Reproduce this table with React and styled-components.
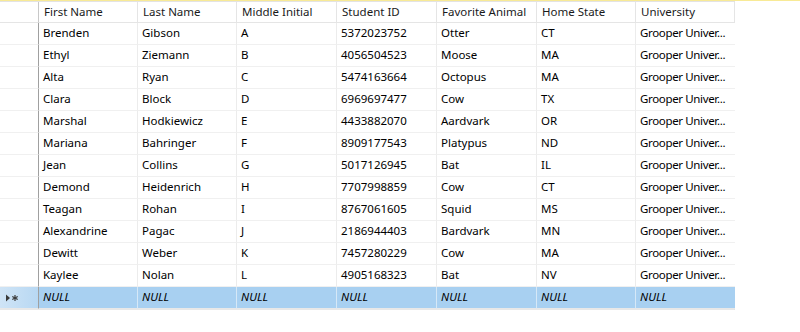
import React from 'react';
import styled, { createGlobalStyle } from 'styled-components';

const GlobalStyle = createGlobalStyle`
  html, body {
    margin: 0;
    padding: 0;
    background: #ffffff;
  }
  body {
    border-top: 1px solid #f8ea96;
    font-family: "Segoe UI", "Noto Sans", sans-serif;
    font-size: 11.5px;
    color: #000;
  }
`

const columns = ['First Name', 'Last Name', 'Middle Initial', 'Student ID', 'Favorite Animal', 'Home State', 'University']

const students = [
  ['Brenden', 'Gibson', 'A', '5372023752', 'Otter', 'CT'],
  ['Ethyl', 'Ziemann', 'B', '4056504523', 'Moose', 'MA'],
  ['Alta', 'Ryan', 'C', '5474163664', 'Octopus', 'MA'],
  ['Clara', 'Block', 'D', '6969697477', 'Cow', 'TX'],
  ['Marshal', 'Hodkiewicz', 'E', '4433882070', 'Aardvark', 'OR'],
  ['Mariana', 'Bahringer', 'F', '8909177543', 'Platypus', 'ND'],
  ['Jean', 'Collins', 'G', '5017126945', 'Bat', 'IL'],
  ['Demond', 'Heidenrich', 'H', '7707998859', 'Cow', 'CT'],
  ['Teagan', 'Rohan', 'I', '8767061605', 'Squid', 'MS'],
  ['Alexandrine', 'Pagac', 'J', '2186944403', 'Bardvark', 'MN'],
  ['Dewitt', 'Weber', 'K', '7457280229', 'Cow', 'MA'],
  ['Kaylee', 'Nolan', 'L', '4905168323', 'Bat', 'NV'],
]

const Grid = styled.div`
  display: grid;
  grid-template-columns: 39px 99px 99px 100px 100px 100px 99px 99px;
  width: 735px;
  border-top: 1px solid #e3e3e3;
  border-bottom: 1px solid #e8e8e8;
  border-right: 1px solid #e0e0e0;
  box-sizing: border-box;
`

const HeaderCell = styled.div`
  height: 20px;
  line-height: 19px;
  padding-left: 5px;
  border-right: 1px solid ${p => (p.$corner ? '#c8c8c8' : '#e5e5e5')};
  border-bottom: 1px solid #e5e5e5;
  white-space: nowrap;
  overflow: hidden;
  color: #1a1a1a;
  &:last-child { border-right: none; }
`

const RowHeader = styled.div`
  height: 21px;
  display: flex;
  align-items: center;
  padding-left: 5px;
  border-right: 1px solid #a0a0a0;
  border-bottom: 1px solid ${p => (p.$new ? '#e8e8e8' : '#f0f0f0')};
  background: ${p => (p.$new ? 'linear-gradient(to right, #cfe4f6, #b8d8f3)' : '#ffffff')};
`

const Cell = styled.div`
  height: 21px;
  line-height: 20px;
  padding-left: 4px;
  border-right: 1px solid ${p => (p.$new ? '#d6e8f7' : '#ececec')};
  border-bottom: 1px solid ${p => (p.$new ? '#e8e8e8' : '#f0f0f0')};
  background: ${p => (p.$new ? '#a8d0f1' : '#ffffff')};
  font-style: ${p => (p.$new ? 'italic' : 'normal')};
  letter-spacing: ${p => (p.$tight ? '-0.35px' : 'normal')};
  white-space: nowrap;
  overflow: hidden;
  &:nth-child(8n) { border-right: none; }
`

function NewRowMark() {
  return (
    <svg width="14" height="8" viewBox="0 0 14 8">
      <path d="M1 0.5 L5 4 L1 7.5 Z" fill="#3a3a3a" />
      <g stroke="#3a3a3a" strokeWidth="1.2">
        <line x1="10" y1="1" x2="10" y2="7" />
        <line x1="7.3" y1="2.5" x2="12.7" y2="5.5" />
        <line x1="7.3" y1="5.5" x2="12.7" y2="2.5" />
      </g>
    </svg>
  )
}

export default function App() {
  return (
    <>
      <GlobalStyle />
      <Grid>
        <HeaderCell $corner />
        {columns.map(c => <HeaderCell key={c}>{c}</HeaderCell>)}

        {students.map(s => (
          <React.Fragment key={s[3]}>
            <RowHeader />
            {s.map((v, i) => <Cell key={i}>{v}</Cell>)}
            <Cell $tight>Grooper Univer...</Cell>
          </React.Fragment>
        ))}

        <RowHeader $new><NewRowMark /></RowHeader>
        {columns.map(c => <Cell key={c} $new>NULL</Cell>)}
      </Grid>
    </>
  )
}
